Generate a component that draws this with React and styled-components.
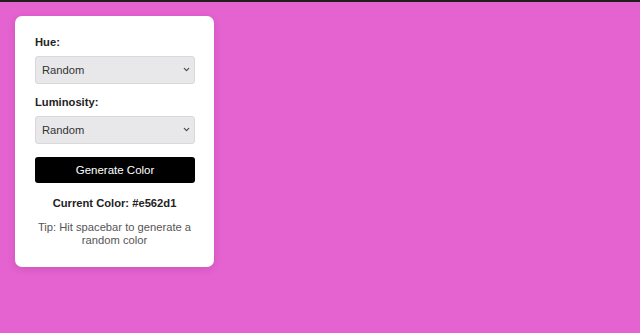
import React, { useState } from 'react'
import styled, { createGlobalStyle } from 'styled-components'
import { ChevronDown } from 'lucide-react'

const GlobalStyle = createGlobalStyle`
html, body {
    margin: 0;
    padding: 0;
}
body {
    font-family: "Liberation Sans", Arial, sans-serif;
}
`

const Page = styled.div`
min-height: 100vh;
box-sizing: border-box;
border-top: 2px solid #1e1e1e;
background: ${({ color }) => color};
padding: 14px 0 0 15px;
`

const Card = styled.div`
width: 199px;
box-sizing: border-box;
padding: 20px 20px 20px;
background: #fff;
border-radius: 7px;
box-shadow: 0 2px 8px rgba(0, 0, 0, 0.12);
display: flex;
flex-direction: column;
`

const Label = styled.label`
display: block;
font-size: 11.2px;
line-height: 13px;
font-weight: bold;
color: #222;
margin: ${({ first }) => (first ? '0' : '12px')} 0 7px;
`

const SelectWrap = styled.div`
position: relative;
width: 160px;
height: 28px;
`

const Select = styled.select`
appearance: none;
width: 100%;
height: 100%;
box-sizing: border-box;
margin: 0;
padding: 0 0 0 6px;
border: 1px solid #d9d9db;
border-radius: 3px;
background: #e8e8ea;
color: #333;
font-family: "Liberation Sans", Arial, sans-serif;
font-size: 11.2px;
outline: none;
`

const Chevron = styled(ChevronDown)`
position: absolute;
right: 4px;
top: 9px;
width: 9px;
height: 9px;
color: #444;
pointer-events: none;
`

const Button = styled.button`
margin-top: 13px;
width: 160px;
height: 26px;
border: none;
border-radius: 3px;
background: #000;
color: #fff;
font-family: "Liberation Sans", Arial, sans-serif;
font-size: 11.5px;
cursor: pointer;
`

const Current = styled.div`
margin-top: 14px;
text-align: center;
font-size: 11.2px;
line-height: 13px;
font-weight: bold;
color: #222;
`

const Tip = styled.p`
margin: 11px 0 0;
text-align: center;
font-size: 11.2px;
line-height: 13px;
color: #555;
`

const hues = ['Random', 'Red', 'Orange', 'Yellow', 'Green', 'Blue', 'Purple', 'Pink', 'Monochrome']
const lums = ['Random', 'Light', 'Dark', 'Bright']

const Dropdown = ({ value, options, onChange }) => (
    <SelectWrap>
        <Select value={value} onChange={(e) => onChange(e.target.value)}>
            {options.map((o) => (
                <option key={o}>{o}</option>
            ))}
        </Select>
        <Chevron strokeWidth={3} />
    </SelectWrap>
)

const App = () => {
    const [hue, setHue] = useState('Random')
    const [lum, setLum] = useState('Random')
    const [color, setColor] = useState('#e562d1')

    const generate = () => {
        const hex = '#' + Math.floor(Math.random() * 0xffffff).toString(16).padStart(6, '0')
        setColor(hex)
    }

    return (
        <>
            <GlobalStyle />
            <Page color={color}>
                <Card>
                    <Label first>Hue:</Label>
                    <Dropdown value={hue} options={hues} onChange={setHue} />
                    <Label>Luminosity:</Label>
                    <Dropdown value={lum} options={lums} onChange={setLum} />
                    <Button onClick={generate}>Generate Color</Button>
                    <Current>Current Color: {color}</Current>
                    <Tip>Tip: Hit spacebar to generate a random color</Tip>
                </Card>
            </Page>
        </>
    )
}

export default App
